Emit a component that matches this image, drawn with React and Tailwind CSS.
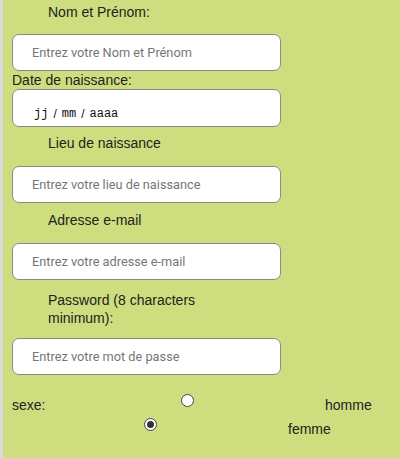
import React from "react";

const labelCls = "text-[14px] leading-[17px] text-[#222] font-['Liberation_Sans',Arial,sans-serif]";
const inputCls = "block w-[269px] h-[37px] rounded-[7px] border border-[#8a8a8a] bg-white pl-[19px] text-[12.75px] text-[#222] placeholder:text-[#767676] font-['Roboto',sans-serif] outline-none";

function Radio({ checked }) {
  return (
    <span className="flex items-center justify-center w-[13px] h-[13px] rounded-full border border-[#444] bg-white shrink-0">
      {checked && <span className="w-[7px] h-[7px] rounded-full bg-[#333]" />}
    </span>
  );
}

export default function App() {
  return (
    <div className="w-[400px] h-[458px] bg-[#cede7e] border-l-[3px] border-[#dadada] overflow-hidden">
      <div className="pl-[9px] pt-[4px]">
        <div className={labelCls + " pl-[36px]"}>Nom et Prénom:</div>
        <input className={inputCls + " mt-[13px]"} placeholder="Entrez votre Nom et Prénom" />
        <div className={labelCls + " mt-[1px]"}>Date de naissance:</div>
        <div className="w-[269px] h-[38px] rounded-[7px] border border-[#8a8a8a] bg-white pl-[21px] pt-[17px] flex items-start text-[12px] leading-[14px] text-[#111]">
          <span className="font-['Liberation_Mono',monospace]">jj</span>
          <span className="font-['Liberation_Sans',sans-serif] mx-[5px]">/</span>
          <span className="font-['Liberation_Mono',monospace]">mm</span>
          <span className="font-['Liberation_Sans',sans-serif] mx-[5px]">/</span>
          <span className="font-['Liberation_Mono',monospace]">aaaa</span>
        </div>
        <div className={labelCls + " pl-[36px] mt-[8px]"}>Lieu de naissance</div>
        <input className={inputCls + " mt-[14px]"} placeholder="Entrez votre lieu de naissance" />
        <div className={labelCls + " pl-[36px] mt-[9px]"}>Adresse e-mail</div>
        <input className={inputCls + " mt-[14px]"} placeholder="Entrez votre adresse e-mail" />
        <div className={labelCls + " pl-[36px] mt-[11px] w-[220px] leading-[18px]"}>Password (8 characters minimum):</div>
        <input type="text" className={inputCls + " mt-[11px]"} placeholder="Entrez votre mot de passe" />
        <div className="mt-[19px] h-[24px] flex items-start">
          <span className={labelCls + " mt-[2px] leading-[18px] w-[169px]"}>sexe:</span>
          <Radio />
          <span className={labelCls + " mt-[2px] leading-[18px] ml-[131px]"}>homme</span>
        </div>
        <div className="h-[24px] flex items-start">
          <span className="w-[132px]" />
          <Radio checked />
          <span className={labelCls + " mt-[2px] leading-[18px] ml-[131px]"}>femme</span>
        </div>
      </div>
    </div>
  );
}
